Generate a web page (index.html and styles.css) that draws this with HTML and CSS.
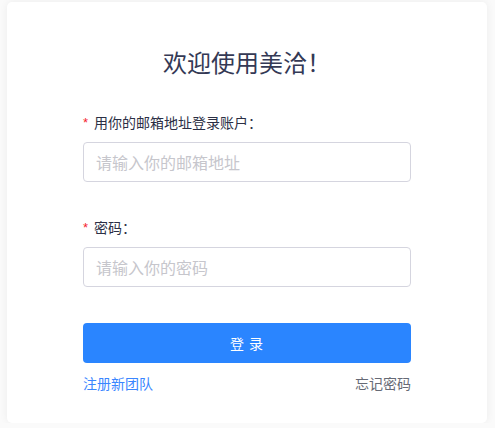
FILE: index.html
```html
<!DOCTYPE html>
<html lang="zh-CN">
<head>
<meta charset="utf-8">
<title>欢迎使用美洽</title>
<link rel="stylesheet" href="styles.css">
</head>
<body>
<div class="card">
  <h1 class="title">欢迎使用美洽！</h1>
  <form class="form">
    <div class="item">
      <label class="label"><span class="req">*</span>用你的邮箱地址登录账户：</label>
      <input class="input" type="text" placeholder="请输入你的邮箱地址">
    </div>
    <div class="item item-last">
      <label class="label"><span class="req">*</span>密码：</label>
      <input class="input" type="password" placeholder="请输入你的密码">
    </div>
    <button class="btn" type="button">登 录</button>
    <div class="links">
      <a class="link-reg" href="#">注册新团队</a>
      <a class="link-forgot" href="#">忘记密码</a>
    </div>
  </form>
</div>
</body>
</html>
```
FILE: styles.css
```css
html, body {
  margin: 0;
  padding: 0;
  background: #fafafa;
}
body {
  padding: 2px 8px 0 7px;
  font-family: "Noto Sans CJK SC", "Noto Sans", sans-serif;
}
.card {
  background: #fff;
  border-radius: 5px;
  box-shadow: 0 0 8px rgba(0, 0, 0, 0.06);
  padding: 44px 0 30px;
  box-sizing: border-box;
  height: 421px;
}
.title {
  margin: 0;
  text-align: center;
  font-size: 24px;
  line-height: 32px;
  font-weight: 400;
  color: #343955;
}
.form {
  width: 328px;
  margin: 34px auto 0;
}
.item {
  margin-bottom: 35px;
}
.item-last {
  margin-bottom: 36px;
}
.label {
  display: flex;
  align-items: center;
  height: 20px;
  font-size: 14px;
  line-height: 20px;
  color: #2b2f45;
  margin-bottom: 10px;
}
.req {
  color: #f5222d;
  font-family: "Liberation Sans", sans-serif;
  font-size: 13px;
  margin-right: 6px;
  position: relative;
  top: 1px;
}
.input {
  display: block;
  width: 100%;
  height: 40px;
  box-sizing: border-box;
  border: 1px solid #d5d5df;
  border-radius: 4px;
  padding: 0 12px;
  font-family: "Noto Sans CJK SC", sans-serif;
  font-size: 16px;
  color: #333;
  outline: none;
  background: #fff;
}
.input::placeholder {
  color: #c6c6cc;
}
.btn {
  display: block;
  width: 100%;
  height: 40px;
  border: none;
  border-radius: 4px;
  background: #2a85ff;
  color: #fff;
  font-family: "Noto Sans CJK SC", sans-serif;
  font-size: 14px;
  letter-spacing: 1px;
  cursor: pointer;
}
.links {
  display: flex;
  justify-content: space-between;
  margin-top: 10px;
  font-size: 14px;
  line-height: 20px;
}
.links a {
  text-decoration: none;
}
.link-reg {
  color: #3a86ff;
}
.link-forgot {
  color: #666a75;
}
```
